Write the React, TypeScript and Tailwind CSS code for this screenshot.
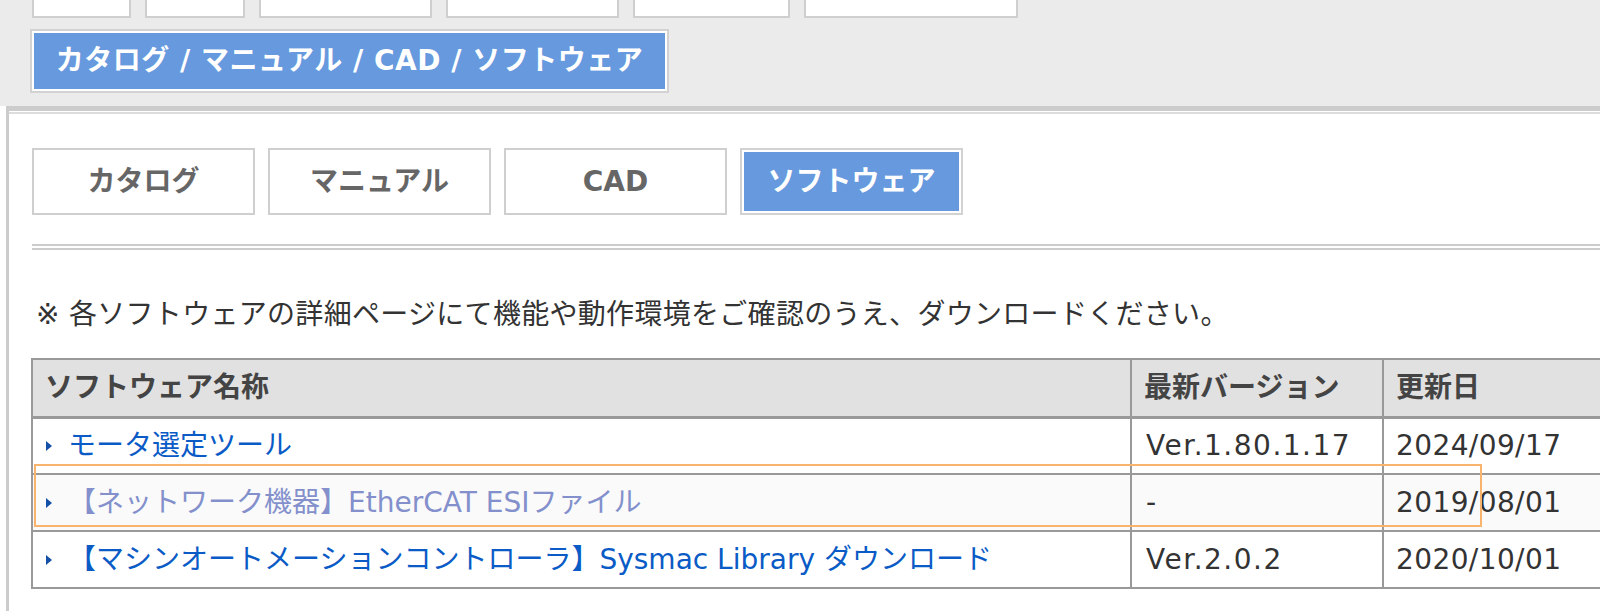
import React from 'react'

const font = 'font-["DejaVu_Sans","Noto_Sans_CJK_JP",sans-serif]'

const topTabs = [99, 100, 173, 173, 157, 214]

const tabs = [
  { label: 'カタログ', active: false },
  { label: 'マニュアル', active: false },
  { label: 'CAD', active: false },
  { label: 'ソフトウェア', active: true },
]

const rows = [
  { name: 'モータ選定ツール', version: 'Ver.1.80.1.17', date: '2024/09/17', hover: false },
  { name: '【ネットワーク機器】EtherCAT ESIファイル', version: '-', date: '2019/08/01', hover: true },
  { name: '【マシンオートメーションコントローラ】Sysmac Library ダウンロード', version: 'Ver.2.0.2', date: '2020/10/01', hover: false },
]

function Arrow() {
  return (
    <svg width="8" height="12" viewBox="0 0 8 12" className="shrink-0">
      <path d="M1 1 L7 6 L1 11 Z" fill="#1550a8" />
    </svg>
  )
}

export default function App() {
  return (
    <div className={`w-[1600px] h-[611px] overflow-hidden bg-white ${font}`}>
      {/* upper category bar */}
      <div className="bg-[#ebebeb] pl-[30px] pb-[13px]">
        <div className="flex gap-[14px] pl-[2px]">
          {topTabs.map((w, i) => (
            <div
              key={i}
              style={{ width: w }}
              className="h-[18px] bg-white border-x-2 border-b-2 border-[#cfcfcf]"
            />
          ))}
        </div>
        <div className="mt-[11px] w-[639px] h-[64px] border-2 border-[#d2d2d2] bg-white p-[2px]">
          <div className="h-full bg-[#6699dd] flex items-center justify-center text-white font-bold text-[28px] tracking-[0.5px]">
            カタログ / マニュアル / CAD / ソフトウェア
          </div>
        </div>
      </div>

      {/* content panel */}
      <div className="ml-[6px] border-t-[5px] border-l-[3px] border-[#cccccc]">
        <div className="mt-px border-t-2 border-[#dddddd] pl-[23px] pt-[34px] pb-[40px]">
          <div className="flex gap-[13px]">
            {tabs.map((t) =>
              t.active ? (
                <div key={t.label} className="w-[223px] h-[67px] border-2 border-[#d2d2d2] bg-white p-[2px]">
                  <div className="h-full bg-[#6699dd] flex items-center justify-center text-white font-bold text-[28px]">
                    {t.label}
                  </div>
                </div>
              ) : (
                <div
                  key={t.label}
                  className="w-[223px] h-[67px] border-2 border-[#cfcfcf] bg-white flex items-center justify-center text-[#666] font-bold text-[28px]"
                >
                  {t.label}
                </div>
              )
            )}
          </div>

          <div className="mt-[29px] h-[6px] border-y-2 border-[#cccccc]" />

          <p className="mt-[48px] text-[28px] leading-[34px] text-[#333] pl-[4px] tracking-[0.3px]">
            ※ 各ソフトウェアの詳細ページにて機能や動作環境をご確認のうえ、ダウンロードください。
          </p>

          <div className="relative mt-[26px] -ml-[1px]">
            <table className="border-collapse w-[1650px] table-fixed text-[28px]">
              <colgroup>
                <col className="w-[1099px]" />
                <col className="w-[252px]" />
                <col />
              </colgroup>
              <thead>
                <tr className="bg-[#e1e1e1] h-[58px]">
                  {['ソフトウェア名称', '最新バージョン', '更新日'].map((h) => (
                    <th
                      key={h}
                      className="border-2 border-b-[3px] border-[#999] text-left font-bold text-[#444] px-[12px]"
                    >
                      {h}
                    </th>
                  ))}
                </tr>
              </thead>
              <tbody>
                {rows.map((r) => (
                  <tr key={r.name} className={`h-[57px] ${r.hover ? 'bg-[#fafafa]' : 'bg-white'}`}>
                    <td className="border-2 border-[#999] px-[12px]">
                      <div className="flex items-center gap-[15px]">
                        <Arrow />
                        <span className={`whitespace-nowrap ${r.hover ? 'text-[#8390cc]' : 'text-[#0a5bc6]'}`}>
                          {r.name}
                        </span>
                      </div>
                    </td>
                    <td className="border-2 border-[#999] px-[14px] text-[#333] whitespace-nowrap tracking-[1.5px]">
                      {r.version}
                    </td>
                    <td className="border-2 border-[#999] px-[12px] text-[#333] whitespace-nowrap tracking-[0.4px]">
                      {r.date}
                    </td>
                  </tr>
                ))}
              </tbody>
            </table>
            {/* focus outline on hovered link */}
            <div className="absolute left-[3px] top-[106px] w-[1448px] h-[63px] border-2 border-[#f8b46c] pointer-events-none" />
          </div>
        </div>
      </div>
    </div>
  )
}
